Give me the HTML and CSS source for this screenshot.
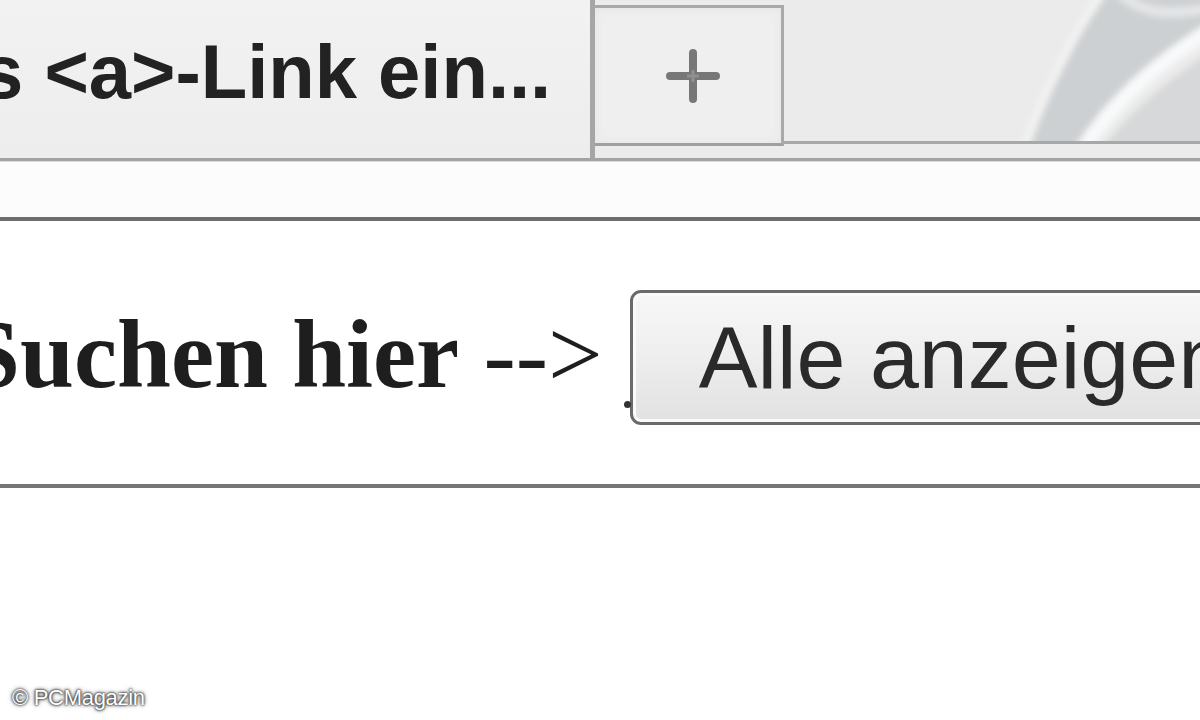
FILE: index.html
```html
<!DOCTYPE html>
<html lang="de">
<head>
<meta charset="utf-8">
<title>Alle anzeigen</title>
<link rel="stylesheet" href="styles.css">
</head>
<body>
<div class="window">
  <div class="tabstrip">
    <div class="tab-active"><span class="tab-title">s &lt;a&gt;-Link ein...</span></div>
    <div class="newtab">
      <svg class="plus" width="54" height="54" viewBox="0 0 54 54"><path d="M27 4 V50 M4 27 H50" stroke="#777777" stroke-width="8" stroke-linecap="round"/><path d="M27 21 V33 M21 27 H33" stroke="#909090" stroke-width="3"/></svg>
    </div>
    <div class="tabrest">
      <svg class="swoosh" width="416" height="141" viewBox="784 0 416 141">
        <defs>
          <filter id="soft" x="-10%" y="-10%" width="120%" height="120%">
            <feGaussianBlur stdDeviation="3"/>
          </filter>
        </defs>
        <g filter="url(#soft)">
          <path d="M1022,150 C1042,95 1068,40 1100,-6 L1210,-6 L1210,20 C1155,58 1112,100 1080,150 Z" fill="#cdd0d2"/>
          <path d="M1100,150 C1130,112 1165,82 1210,52 L1210,150 Z" fill="#d7d8d9"/>
          <path d="M1082,150 C1112,104 1152,66 1210,30" fill="none" stroke="#f8f9fa" stroke-width="15"/>
          <path d="M1024,150 C1044,95 1070,40 1102,-6" fill="none" stroke="#f3f3f3" stroke-width="8"/>
          <path d="M1120,-6 C1140,10 1160,18 1210,8" fill="none" stroke="#e4e6e8" stroke-width="10"/>
        </g>
      </svg>
    </div>
  </div>
  <div class="toolbar"></div>
  <div class="content">
    <div class="row">
      <span class="label"><b>Suchen hier</b> --&gt;</span>
      <button class="btn" type="button">Alle anzeigen</button>
    </div>
  </div>
  <div class="below"></div>
  <div class="watermark">© PCMagazin</div>
</div>
</body>
</html>
```

FILE: styles.css
```css
html, body {
  margin: 0;
  padding: 0;
  background: #ffffff;
}

.window {
  position: relative;
  width: 1200px;
  height: 720px;
  overflow: hidden;
  background: #ffffff;
}

/* ---------- tab strip ---------- */
.tabstrip {
  display: flex;
  height: 158px;
  background: #ececec;
  border-bottom: 3px solid #a3a3a3;
}

.tab-active {
  width: 590px;
  flex: none;
  overflow: hidden;
  white-space: nowrap;
  background: linear-gradient(#f2f2f2, #ededed);
  border-right: 5px solid #a6a6a6;
}

.tab-title {
  display: block;
  margin-left: -19px;
  padding-top: 27px;
  font-family: "Liberation Sans", Arial, sans-serif;
  font-weight: bold;
  font-size: 76px;
  line-height: 90px;
  color: #222222;
}

.newtab {
  flex: none;
  width: 186px;
  height: 135px;
  margin-top: 5px;
  display: flex;
  align-items: center;
  justify-content: center;
  background: #efefef;
  border-top: 3px solid #a9a9a9;
  border-right: 3px solid #a9a9a9;
  border-bottom: 3px solid #a0a0a0;
  box-shadow: inset 0 0 10px #e4e4e4;
}

.plus {
  display: block;
  margin-left: 10px;
  margin-top: 0;
}

.tabrest {
  flex: 1;
  height: 141px;
  position: relative;
  overflow: hidden;
  border-bottom: 3px solid #a8a8a8;
  background: #ebebeb;
}

.swoosh {
  position: absolute;
  right: 0;
  top: 0;
  display: block;
}

/* ---------- toolbar ---------- */
.toolbar {
  height: 55px;
  background: #fcfcfc;
  border-top: 1px solid #dcdcdc;
  border-bottom: 4px solid #6e6e6e;
  box-shadow: 0 2px 2px #c8c8c8;
}

/* ---------- content ---------- */
.content {
  height: 263px;
  background: #ffffff;
  border-bottom: 4px solid #767676;
  box-shadow: 0 2px 2px #c4c4c4;
  overflow: hidden;
}

.row {
  display: flex;
  align-items: center;
  height: 135px;
  margin-top: 69px;
  margin-left: -34px;
  white-space: nowrap;
}

.label {
  font-family: "Liberation Serif", "Times New Roman", serif;
  font-size: 97px;
  line-height: 1;
  color: #1e1e1e;
  margin-top: -6px;
}

.label b {
  font-weight: bold;
}

.btn {
  position: relative;
  flex: none;
  margin-left: 27px;
  width: 700px;
  height: 135px;
  padding: 0 0 0 66px;
  text-align: left;
  font-family: "Liberation Sans", Arial, sans-serif;
  font-size: 88px;
  line-height: 1;
  color: #2a2a2a;
  background: linear-gradient(#f7f7f7 0%, #efefef 45%, #e1e1e1 100%);
  border: 3px solid #6a6a6a;
  border-radius: 11px;
  box-shadow: inset 0 0 0 3px #fafafa;
}

.btn::before {
  content: "";
  position: absolute;
  left: -9px;
  bottom: 14px;
  width: 7px;
  height: 7px;
  border-radius: 50%;
  background: #333333;
}

.below {
  height: 230px;
  background: #ffffff;
}

/* ---------- watermark ---------- */
.watermark {
  position: absolute;
  left: 12px;
  bottom: 9px;
  font-family: "Liberation Sans", Arial, sans-serif;
  font-size: 22px;
  letter-spacing: -0.3px;
  color: #ffffff;
  text-shadow: 0 0 2px #222222, 0 0 3px #333333, 0 0 5px #666666;
}
```
